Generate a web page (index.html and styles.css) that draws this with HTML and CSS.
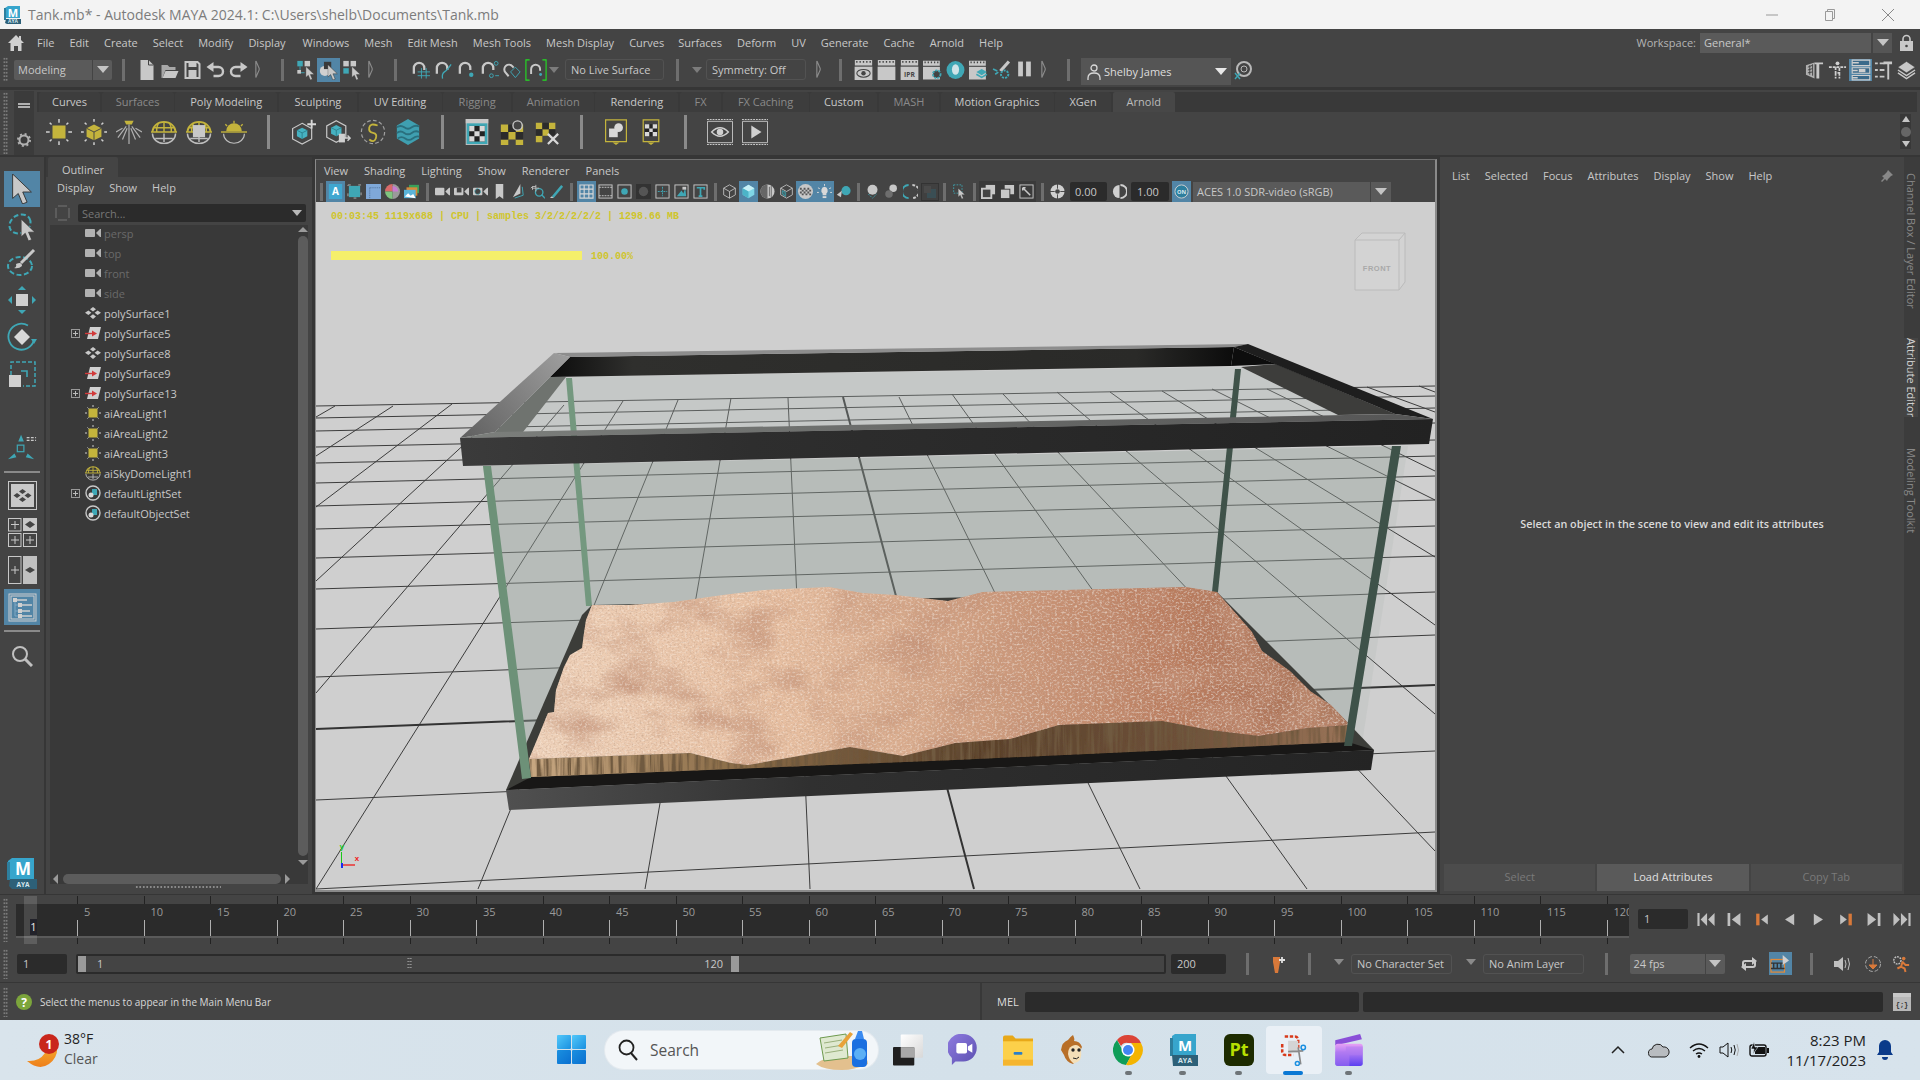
FILE: index.html
```
<!DOCTYPE html>
<html lang="en">
<head>
<meta charset="utf-8">
<title>Tank.mb* - Autodesk MAYA 2024.1</title>
<link rel="stylesheet" href="styles.css">
</head>
<body>
<svg class="defs" width="0" height="0">
  <symbol id="cur" viewBox="0 0 10 16"><path d="M0 0v13l3-2.6L5.3 16l2.4-1-2.3-5.4H10z" fill="#c8c8c8" stroke="#333" stroke-width=".5"/></symbol>
  <symbol id="poly" viewBox="0 0 16 12"><path d="M8 0l3 2.2-3 2.2-3-2.2zM3.400 3.400l3 2.400-3 2.200L0 5.800zM12.600 3.400L16 5.800l-3.400 2.200-3-2.200zM8 7.200l3 2.300L8 12 5 9.500z" fill="#c8c8c8"/></symbol>
  <symbol id="cam" viewBox="0 0 16 10"><rect y="1" width="10" height="8" rx="1" fill="#c8c8c8"/><path d="M11 5l4-4h1v8h-1z" fill="#c8c8c8"/></symbol>
  <symbol id="mesh" viewBox="0 0 16 12"><path d="M5 0h11l-3 12H2z" fill="#d0d0d0"/><path d="M0 6.500h9" stroke="#d23a3a" stroke-width="1.400"/><path d="M7 3.500l5 3-5 3z" fill="#d23a3a"/></symbol>
  <symbol id="alight" viewBox="0 0 16 16"><rect x="3.500" y="3.500" width="9" height="9" fill="#c4b43c"/><path d="M8 0v2M8 14v2M0 8h2M14 8h2M2.500 2.500l1 1M12.500 12.500l1 1M13.500 2.500l-1 1M2.500 13.500l1-1" stroke="#cfcfcf"/></symbol>
  <symbol id="dome" viewBox="0 0 18 16"><path d="M1 8a8 7 0 0 1 16 0" fill="none" stroke="#c4b43c" stroke-width="1.200"/><path d="M0 8h18M2 5h14M9 1v7M5 2q-1.500 3-1 6M13 2q1.500 3 1 6" stroke="#c4b43c" fill="none"/><path d="M1 9a8 7 0 0 0 16 0M3 12.500h12M9 9v6" fill="none" stroke="#bdbdbd"/></symbol>
  <symbol id="set" viewBox="0 0 16 16"><circle cx="8" cy="8" r="7" fill="none" stroke="#c8c8c8" stroke-width="1.400"/><rect x="7" y="4" width="5" height="6" fill="#3fa7b5"/><circle cx="6" cy="10" r="2.500" fill="#d8d8d8"/></symbol>
  <symbol id="plus" viewBox="0 0 9 9"><rect x=".5" y=".5" width="8" height="8" fill="none" stroke="#999"/><path d="M2 4.500h5M4.500 2v5" stroke="#bbb"/></symbol>
  <symbol id="mag" viewBox="0 0 18 18"><path d="M3 14V8a5.500 5.500 0 0 1 11 0v2" fill="none" stroke="#c8c8c8" stroke-width="2.400"/></symbol>
  <symbol id="clap" viewBox="0 0 16 18"><path d="M0 0h16v5H0z" fill="#c8c8c8"/><path d="M2 1v1.500M5 1v1.500M8 1v1.500M11 1v1.500M14 1v1.500" stroke="#444" stroke-width="1.200"/></symbol>
  <symbol id="tilt" viewBox="0 0 6 22"><path d="M1 0l4 9v2l-4 9z" fill="none" stroke="#8a8a8a" stroke-width="1.400"/></symbol>
</svg>

<header class="title">
  <svg class="t-logo" viewBox="0 0 20 20"><path d="M2 3l3-2h12v12H2z" fill="#37a5cc"/><path d="M1 3h2v12H1z" fill="#2d7f9e"/><path d="M3 14h15v5H4l-2-1z" fill="#2d6078"/><text class="t-m" x="10" y="11.500">M</text><text class="t-aya" x="10" y="18">AYA</text></svg>
  <span class="t-text">Tank.mb* - Autodesk MAYA 2024.1: C:\Users\shelb\Documents\Tank.mb</span>
  <span class="t-ctrls">
    <svg class="t-c" viewBox="0 0 14 14"><path d="M1 7h12" stroke="#999" fill="none"/></svg>
    <svg class="t-c" viewBox="0 0 14 14"><path d="M2.500 3.500h7v9h-7zM4.500 3.500v-2h7v9h-2" stroke="#999" fill="none"/></svg>
    <svg class="t-c" viewBox="0 0 14 14"><path d="M1 1l12 12M13 1L1 13" stroke="#888" fill="none"/></svg>
  </span>
</header>

<nav class="menu">
  <svg class="home" viewBox="0 0 16 16"><path d="M8 0L0 8h2.500v8H6v-5h4v5h3.500V8H16l-3-3V1h-2v2z" fill="#d0d0d0"/></svg>
  <ul class="menu-list">
    <li>File</li><li>Edit</li><li>Create</li><li>Select</li><li>Modify</li><li>Display</li><li>Windows</li><li>Mesh</li><li>Edit Mesh</li><li>Mesh Tools</li><li>Mesh Display</li><li>Curves</li><li>Surfaces</li><li>Deform</li><li>UV</li><li>Generate</li><li>Cache</li><li>Arnold</li><li>Help</li>
  </ul>
  <div class="workspace">
    <span class="ws-label">Workspace:</span>
    <span class="ws-box">General*</span>
    <span class="ws-arrow"><i class="tri"></i></span>
    <svg class="lock" viewBox="0 0 13 17"><path d="M3 8V5a3.500 3.500 0 0 1 7 0v3" fill="none" stroke="#c8c8c8" stroke-width="1.600"/><rect y="7" width="13" height="10" fill="#c8c8c8"/><circle cx="6.500" cy="12" r="1.300" fill="#444"/></svg>
  </div>
</nav>

<section class="status">
  <i class="grip grip-s"></i>
  <div class="dd dd-mode"><span class="dd-text">Modeling</span><span class="dd-arrow"><i class="tri"></i></span></div>
  <i class="handle"></i>
  <span class="slot"><svg class="ic" viewBox="0 0 18 20"><path d="M3 0h8l5 5v15H3z" fill="#c8c8c8"/><path d="M11 0v5h5" fill="none" stroke="#444"/></svg></span>
  <span class="slot"><svg class="ic" viewBox="0 0 18 20"><path d="M1 5h6l2 2h6v3H5l-3 8H1z" fill="#a8a8a8"/><path d="M5 11h13l-3 7H2z" fill="#c8c8c8"/></svg></span>
  <span class="slot"><svg class="ic" viewBox="0 0 18 20"><path d="M2 2h12l2 2v14H2z" fill="none" stroke="#c8c8c8" stroke-width="2"/><rect x="5" y="2" width="8" height="5" fill="#c8c8c8"/><rect x="5" y="10" width="8" height="7" fill="#c8c8c8"/></svg></span>
  <span class="slot"><svg class="ic" viewBox="0 0 18 20"><path d="M2 7h10a4.500 4.500 0 0 1 0 9H7" fill="none" stroke="#c8c8c8" stroke-width="2.400"/><path d="M7 2v10L0 7z" fill="#c8c8c8"/></svg></span>
  <span class="slot"><svg class="ic" viewBox="0 0 18 20"><path d="M16 7H6a4.500 4.500 0 0 0 0 9h5" fill="none" stroke="#c8c8c8" stroke-width="2.400"/><path d="M11 2v10l7-5z" fill="#c8c8c8"/></svg></span>
  <svg class="collapse" viewBox="0 0 6 22"><use href="#tilt"/></svg>
  <i class="handle"></i>
  <span class="slot"><svg class="ic" viewBox="0 0 20 22"><rect x="1" y="1" width="6" height="6" fill="#3fa7b5"/><rect x="9" y="1" width="6" height="6" fill="#c8c8c8"/><path d="M4 7v7h5" fill="none" stroke="#3fa7b5"/><rect x="1" y="11" width="4" height="4" fill="#c8c8c8"/><use href="#cur" x="10" y="7" width="10" height="15"/></svg></span>
  <span class="slot slot-on"><svg class="ic" viewBox="0 0 20 22"><circle cx="6" cy="12" r="5.500" fill="#d0d0d0"/><rect x="5" y="2" width="8" height="8" fill="#3a3a3a"/><use href="#cur" x="9" y="5" width="11" height="17"/></svg></span>
  <span class="slot"><svg class="ic" viewBox="0 0 20 22"><rect x="1" y="1" width="6" height="6" fill="#c8c8c8"/><rect x="9" y="1" width="6" height="6" fill="#c8c8c8"/><rect x="1" y="9" width="6" height="6" fill="#3fa7b5"/><use href="#cur" x="10" y="7" width="10" height="15"/></svg></span>
  <svg class="collapse" viewBox="0 0 6 22"><use href="#tilt"/></svg>
  <i class="handle"></i>
  <span class="slot slot-first"><svg class="ic" viewBox="0 0 20 20"><use href="#mag" width="18" height="18"/><path d="M11 8v11M16 8v11M7 12h13M7 16h13" stroke="#3fa7b5"/></svg></span>
  <span class="slot"><svg class="ic" viewBox="0 0 20 20"><use href="#mag" width="18" height="18"/><path d="M18 4q-4 6-7 8t-2 7" fill="none" stroke="#3fa7b5" stroke-width="1.400"/></svg></span>
  <span class="slot"><svg class="ic" viewBox="0 0 20 20"><use href="#mag" width="18" height="18"/><circle cx="15" cy="15" r="2.300" fill="#3fa7b5"/></svg></span>
  <span class="slot"><svg class="ic" viewBox="0 0 20 20"><use href="#mag" width="18" height="18"/><circle cx="17" cy="3" r="2" fill="none" stroke="#3fa7b5"/><circle cx="12" cy="16" r="2" fill="none" stroke="#3fa7b5"/><path d="M16 16h4" stroke="#3fa7b5"/></svg></span>
  <span class="slot"><svg class="ic" viewBox="0 0 20 20"><g transform="rotate(-40 10 10)"><use href="#mag" width="16" height="16"/></g><path d="M8 12l5-5 5 5-5 6z" fill="none" stroke="#3fa7b5"/></svg></span>
  <span class="slot"><svg class="ic ic-l" viewBox="0 0 24 24"><path d="M5 1H1v22h4M19 1h4v22h-4" fill="none" stroke="#22e022" stroke-width="1.200"/><use href="#mag" x="4" y="4" width="16" height="16"/><circle cx="17" cy="17" r="1.600" fill="#3fa7b5"/></svg></span>
  <i class="tri tri-sm tri-a"></i>
  <span class="outbox ob-live">No Live Surface</span>
  <i class="handle handle-b"></i>
  <i class="tri tri-sm tri-c"></i>
  <span class="outbox ob-sym">Symmetry: Off</span>
  <svg class="collapse collapse-d" viewBox="0 0 6 22"><use href="#tilt"/></svg>
  <i class="handle"></i>
  <span class="slot"><svg class="ic" viewBox="0 0 16 18"><use href="#clap" width="16" height="18"/><rect y="6" width="16" height="12" fill="#c8c8c8"/><ellipse cx="8" cy="12" rx="6" ry="3.500" fill="none" stroke="#444"/><circle cx="8" cy="12" r="2" fill="#444"/></svg></span>
  <span class="slot"><svg class="ic" viewBox="0 0 16 18"><use href="#clap" width="16" height="18"/><rect y="6" width="16" height="12" fill="#c8c8c8"/></svg></span>
  <span class="slot"><svg class="ic" viewBox="0 0 16 18"><use href="#clap" width="16" height="18"/><rect y="6" width="16" height="12" fill="#c8c8c8"/><text class="ipr" x="8" y="15.500">IPR</text></svg></span>
  <span class="slot"><svg class="ic" viewBox="0 0 18 18"><use href="#clap" width="16" height="18"/><rect y="6" width="16" height="12" fill="#c8c8c8"/><circle cx="13" cy="13" r="3.600" fill="#444" stroke="#3fa7b5" stroke-width="1.800" stroke-dasharray="2 1"/></svg></span>
  <span class="slot"><svg class="ic" viewBox="0 0 18 18"><ellipse cx="9" cy="9" rx="8.500" ry="8.500" fill="#3fa7b5"/><ellipse cx="9" cy="8.500" rx="3.400" ry="5" fill="#cfe4e8"/></svg></span>
  <span class="slot"><svg class="ic" viewBox="0 0 18 18"><use href="#clap" width="16" height="18"/><rect y="6" width="16" height="12" fill="#c8c8c8"/><path d="M12 8l5 3-5 3-5-3z" fill="#3fa7b5"/><path d="M7 13l5 3 5-3" fill="none" stroke="#3fa7b5" stroke-width="1.500"/></svg></span>
  <span class="slot"><svg class="ic" viewBox="0 0 18 18"><path d="M16 1L8 10" stroke="#c8c8c8" stroke-width="3"/><path d="M1 8l4 2M3 13l3-2" stroke="#3fa7b5" stroke-width="1.500"/><circle cx="12" cy="13" r="3.500" fill="none" stroke="#3fa7b5" stroke-width="1.800" stroke-dasharray="2 1"/></svg></span>
  <span class="slot"><svg class="ic" viewBox="0 0 18 18"><rect x="3" y="1" width="4.500" height="14" fill="#c8c8c8"/><rect x="10.500" y="1" width="4.500" height="14" fill="#c8c8c8"/></svg></span>
  <svg class="collapse" viewBox="0 0 6 22"><use href="#tilt"/></svg>
  <i class="handle"></i>
  <div class="profile">
    <svg class="person" viewBox="0 0 14 16"><circle cx="7" cy="4" r="3" fill="none" stroke="#d8d8d8" stroke-width="1.300"/><path d="M1 16v-2q0-5 6-5t6 5v2" fill="none" stroke="#d8d8d8" stroke-width="1.300"/></svg>
    <span class="p-name">Shelby James</span>
    <i class="tri tri-w"></i>
  </div>
  <svg class="helpx" viewBox="0 0 18 20"><circle cx="10" cy="9" r="7" fill="none" stroke="#b8b8b8" stroke-width="2"/><circle cx="10" cy="9" r="3" fill="none" stroke="#b8b8b8"/><path d="M1 13l5 6M6 13l-5 6" stroke="#3fa7b5" stroke-width="1.400"/></svg>
  <div class="st-right">
    <span class="slot"><svg class="ic" viewBox="0 0 20 20"><path d="M1 5l9-3v17L1 15z" fill="#b0b0b0"/><path d="M3 7l5-2M3 10l5-1.500M3 13l5-1M5 5v10M8 4v12" stroke="#444"/><path d="M10 2h9v2h-4v15h-3V4h-2z" fill="#c8c8c8"/></svg></span>
    <span class="slot"><svg class="ic" viewBox="0 0 20 20"><circle cx="10" cy="3" r="2" fill="#d0d0d0"/><path d="M1 7h18M8 7v6h4V7M8 13v6M12 13v6" stroke="#d0d0d0" stroke-width="1.800" fill="none" stroke-dasharray="3 1"/></svg></span>
    <span class="slot slot-on"><svg class="ic ic-l" viewBox="0 0 20 20"><path d="M2 1h16v5H2zM2 8h16v5H2zM2 15h16v4H2z" fill="#3b6a8a" stroke="#cfcfcf"/><path d="M2 3.500h6M2 10.500h5M2 17h5" stroke="#cfcfcf" stroke-width="1.400"/><rect x="8" y="9" width="6" height="3" fill="#cfcfcf"/></svg></span>
    <span class="slot"><svg class="ic" viewBox="0 0 20 20"><path d="M1 3h3M1 10h3M1 17h3M6 3h5M6 10h5M6 17h5" stroke="#c8c8c8" stroke-width="2"/><path d="M10 1h9v3h-3v16h-2V4h-4z" fill="#c8c8c8"/></svg></span>
    <span class="slot"><svg class="ic" viewBox="0 0 20 20"><path d="M10 1l9 6-9 6-9-6z" fill="#c8c8c8" stroke="#444" stroke-width=".5"/><path d="M1 10l9 6 9-6M1 13l9 6 9-6" fill="none" stroke="#c8c8c8" stroke-width="1.500"/></svg></span>
  </div>
</section>

<section class="shelf">
  <i class="grip grip-sh"></i>
  <div class="shelf-left">
    <svg class="eq" viewBox="0 0 12 8"><path d="M0 1h12M0 4h12" stroke="#b0b0b0" stroke-width="2"/></svg>
    <svg class="eq-gear" viewBox="0 0 14 14"><circle cx="7" cy="7" r="4.500" fill="none" stroke="#b0b0b0" stroke-width="2"/><circle cx="7" cy="7" r="6" fill="none" stroke="#b0b0b0" stroke-width="2" stroke-dasharray="2 2.700"/></svg>
  </div>
  <div class="shelf-main">
    <div class="tabs">
      <span class="tab">Curves</span><span class="tab dim">Surfaces</span><span class="tab">Poly Modeling</span><span class="tab">Sculpting</span><span class="tab">UV Editing</span><span class="tab dim">Rigging</span><span class="tab dim">Animation</span><span class="tab">Rendering</span><span class="tab dim">FX</span><span class="tab dim">FX Caching</span><span class="tab">Custom</span><span class="tab dim">MASH</span><span class="tab">Motion Graphics</span><span class="tab">XGen</span><span class="tab on">Arnold</span>
    </div>
    <div class="shelf-icons">
      <span class="si"><svg viewBox="0 0 28 28"><rect x="7" y="7" width="14" height="14" fill="#c4b43c"/><path d="M14 0v4M14 24v4M0 14h4M24 14h4M4 4l2 2M22 22l2 2M24 4l-2 2M4 24l2-2" stroke="#cfcfcf" stroke-width="1.600"/></svg></span>
      <span class="si"><svg viewBox="0 0 28 28"><path d="M14 6l8 4v9l-8 4-8-4v-9z" fill="#c4b43c"/><path d="M6 10l8 4 8-4M14 14v9" stroke="#444" fill="none"/><path d="M14 0v3M14 25v3M0 14h3M25 14h3M4 4l2 2M22 22l2 2M24 4l-2 2M4 24l2-2" stroke="#cfcfcf" stroke-width="1.600"/></svg></span>
      <span class="si"><svg viewBox="0 0 28 28"><path d="M9 2h10l-2 4h-6z" fill="#c4b43c"/><path d="M14 6v21M11 8L2 20M17 8l9 12M7 10L0 14M21 10l7 4M12 10l-5 12M16 10l5 12" stroke="#b0b0b0" stroke-width="1.300"/></svg></span>
      <span class="si"><svg viewBox="0 0 30 28"><use href="#dome" width="30" height="28"/></svg></span>
      <span class="si"><svg viewBox="0 0 30 28"><use href="#dome" width="30" height="28"/><rect x="8" y="6" width="14" height="14" fill="#c8c8c8"/></svg></span>
      <span class="si"><svg viewBox="0 0 30 28"><path d="M6 13a9 9 0 0 1 18 0z" fill="#c4b43c"/><path d="M15 1v3M5 5l2 2M25 5l-2 2" stroke="#c4b43c" stroke-width="1.500"/><path d="M0 14h30" stroke="#c4b43c" stroke-width="1.600"/><path d="M3 16a12 11 0 0 0 24 0" fill="none" stroke="#bdbdbd" stroke-width="1.300"/></svg></span>
      <i class="sep"></i>
      <span class="si"><svg viewBox="0 0 30 28"><path d="M14 4l11 6v12l-11 6-11-6V10z" fill="none" stroke="#c8c8c8" stroke-width="1.400"/><path d="M14 9l6 3v7l-6 3-6-3v-7z" fill="#46b2c2"/><path d="M8 12l6 3 6-3M14 15v7" stroke="#2a7d8a" fill="none"/><path d="M20 5h10M25 0v10" stroke="#d8d8d8" stroke-width="2.200"/></svg></span>
      <span class="si"><svg viewBox="0 0 30 28"><path d="M13 1l11 6v13l-11 6-11-6V7z" fill="none" stroke="#c8c8c8" stroke-width="1.400"/><path d="M13 6l6 3v7l-6 3-6-3V9z" fill="#46b2c2"/><path d="M7 9l6 3 6-3M13 12v7" stroke="#2a7d8a" fill="none"/><rect x="16" y="16" width="7" height="10" fill="#d0d0d0"/><path d="M23 21h6M26 18l3 3-3 3" stroke="#d0d0d0" stroke-width="1.600" fill="none"/></svg></span>
      <span class="si"><svg viewBox="0 0 28 28"><circle cx="14" cy="14" r="12.500" fill="none" stroke="#a0a0a0" stroke-width="1.300" stroke-dasharray="4 2.500"/><path d="M19 7q-8-3-9 2t4 6 3 6-7 1" fill="none" stroke="#c4b43c" stroke-width="2"/></svg></span>
      <span class="si"><svg viewBox="0 0 26 28"><path d="M13 0l12 7v14l-12 7-12-7V7z" fill="#3f9fb0"/><path d="M1 9q4-3 8 0t8 0 8-1M1 15q4-3 8 0t8 0 8-1M2 21q4-3 8 0t8 0 7-2" fill="none" stroke="#2a6f7d" stroke-width="2"/></svg></span>
      <i class="sep"></i>
      <span class="si"><svg viewBox="0 0 26 30"><rect x=".5" y=".5" width="25" height="29" fill="#3fa7b5" stroke="#c8c8c8"/><rect y="0" width="26" height="5" fill="#c8c8c8"/><rect x="4" y="8" width="18" height="18" fill="#222"/><path d="M4 8h6v6H4zM16 8h6v6h-6zM10 14h6v6h-6zM4 20h6v6H4zM16 20h6v6h-6z" fill="#d8d8d8"/></svg></span>
      <span class="si"><svg viewBox="0 0 26 28"><path d="M1 6h8v8H1zM17 6h8v8h-8zM9 14h8v8H9zM1 22h8v6H1zM17 22h8v6h-8z" fill="#c4b43c"/><path d="M9 6h8v8H9zM1 14h8v8H1zM17 14h8v8h-8z" fill="#2b2b2b"/><circle cx="19" cy="7" r="5" fill="#444" stroke="#c8c8c8" stroke-width="1.500"/></svg></span>
      <span class="si"><svg viewBox="0 0 26 28"><path d="M1 4h7v7H1zM15 4h7v7h-7zM8 11h7v7H8zM1 18h7v7H1z" fill="#c4b43c"/><path d="M8 4h7v7H8zM1 11h7v7H1zM15 11h7v7h-7z" fill="#2b2b2b"/><path d="M14 16l11 11M25 16L14 27" stroke="#d8d8d8" stroke-width="2.400"/></svg></span>
      <i class="sep"></i>
      <span class="si"><svg viewBox="0 0 26 30"><path d="M1 1h24v25H1z" fill="none" stroke="#c4b43c" stroke-width="1.400"/><path d="M9 27h8l-4 3z" fill="#c4b43c"/><rect x="5" y="11" width="10" height="10" fill="#d8d8d8"/><circle cx="16" cy="10" r="5" fill="#d8d8d8"/></svg></span>
      <span class="si"><svg viewBox="0 0 26 30"><path d="M4 1h18v25H4z" fill="none" stroke="#c4b43c" stroke-width="1.400"/><path d="M9 27h8l-4 3z" fill="#c4b43c"/><rect x="6" y="6" width="14" height="14" fill="#222"/><path d="M6 6h5v5H6zM15 6h5v5h-5zM11 11h4v4h-4zM6 15h5v5H6zM15 15h5v5h-5z" fill="#d8d8d8"/></svg></span>
      <i class="sep"></i>
      <span class="si"><svg viewBox="0 0 28 28"><path d="M.5 2.500h27v23H.5z" fill="none" stroke="#c8c8c8"/><path d="M0 .5h28M0 27.500h28" stroke="#c8c8c8" stroke-dasharray="2 1" stroke-width="1.400"/><path d="M5 14q9-9 18 0-9 9-18 0z" fill="none" stroke="#d0d0d0" stroke-width="1.600"/><circle cx="14" cy="14" r="3.500" fill="#d0d0d0"/></svg></span>
      <span class="si"><svg viewBox="0 0 28 28"><path d="M.5 2.500h27v23H.5z" fill="none" stroke="#c8c8c8"/><path d="M0 .5h28M0 27.500h28" stroke="#c8c8c8" stroke-dasharray="2 1" stroke-width="1.400"/><path d="M10 7l11 7-11 7z" fill="#d0d0d0"/></svg></span>
      <span class="shelf-scroll"><i class="tri tri-up"></i><i class="scroll-dot"></i><i class="tri"></i></span>
    </div>
  </div>
</section>

<main class="work">
  <aside class="toolbox">
    <span class="tool tool-first tool-on"><svg class="ti" viewBox="0 0 20 26"><use href="#cur" width="20" height="26"/></svg></span>
    <span class="tool"><svg class="ti" viewBox="0 0 30 30"><ellipse cx="13" cy="13" rx="11" ry="9" transform="rotate(-30 13 13)" fill="none" stroke="#3fa7b5" stroke-width="2" stroke-dasharray="5 2.500"/><use href="#cur" x="14" y="8" width="14" height="22"/></svg></span>
    <span class="tool"><svg class="ti" viewBox="0 0 30 30"><ellipse cx="13" cy="18" rx="12" ry="9" fill="none" stroke="#3fa7b5" stroke-width="2" stroke-dasharray="5 2.500"/><path d="M27 2L14 15" stroke="#c8c8c8" stroke-width="3"/><path d="M9 16q6-3 6 2-3 3-8 2 3-1 2-4z" fill="#c8c8c8"/></svg></span>
    <span class="tool"><svg class="ti" viewBox="0 0 30 30"><rect x="9" y="9" width="12" height="12" fill="#d0d0d0"/><path d="M15 1l4 4h-8zM15 29l-4-4h8zM1 15l4-4v8zM29 15l-4 4v-8z" fill="#3fa7b5"/></svg></span>
    <span class="tool"><svg class="ti" viewBox="0 0 30 30"><path d="M15 7l8 8-8 8-8-8z" fill="#d8d8d8"/><path d="M27 18A13 13 0 1 1 21 3.500" fill="none" stroke="#3fa7b5" stroke-width="1.800"/><path d="M24 17h6l-3 5z" fill="#3fa7b5"/></svg></span>
    <span class="tool"><svg class="ti" viewBox="0 0 30 30"><path d="M4 16V3h24v24H16" fill="none" stroke="#3fa7b5" stroke-width="1.500" stroke-dasharray="4 2"/><rect x="2" y="16" width="12" height="12" fill="#d0d0d0"/><path d="M14 12h6v6" fill="none" stroke="#3fa7b5" stroke-width="1.600"/></svg></span>
    <span class="tool tool-manip"><svg class="ti" viewBox="0 0 32 28"><rect x="11" y="12" width="7" height="7" fill="none" stroke="#3fa7b5" stroke-width="1.300"/><path d="M15 1l3 7h-6zM1 27l7-6 2 4zM29 27l-7-6-2 4z" fill="#3fa7b5"/><path d="M21 4h10M21 7h10" stroke="#c8c8c8" stroke-dasharray="3 1.500" stroke-width="1.400"/></svg></span>
    <i class="tb-line tb-line-a"></i>
    <span class="lay lay-one"><svg viewBox="0 0 29 29"><rect x=".5" y=".5" width="28" height="28" fill="none" stroke="#c8c8c8"/><rect x="3" y="3" width="23" height="23" fill="#c8c8c8"/><path d="M14.500 8l3.500 2.500-3.500 2.500-3.500-2.500zM9 12l3.500 2.500L9 17l-3.500-2.500zM20 12l3.500 2.500L20 17l-3.500-2.500zM14.500 16l3.500 2.500-3.500 2.500-3.500-2.500z" fill="#444"/></svg></span>
    <span class="lay lay-four"><svg viewBox="0 0 29 29"><rect x=".5" y=".5" width="12.500" height="12.500" fill="none" stroke="#c8c8c8"/><path d="M3 6.500h8M7 3v8" stroke="#c8c8c8"/><rect x="15" width="14" height="13" fill="#c8c8c8"/><path d="M22 3l5 3.500-5 3.500-5-3.500z" fill="#444"/><rect x=".5" y="15.500" width="12.500" height="13" fill="none" stroke="#c8c8c8"/><path d="M3 22h8M7 18v8" stroke="#c8c8c8"/><rect x="15.500" y="15.500" width="13" height="13" fill="none" stroke="#c8c8c8"/><path d="M18 22h8M22 18v8" stroke="#c8c8c8"/></svg></span>
    <span class="lay lay-two"><svg viewBox="0 0 29 28"><rect x=".5" y=".5" width="12.500" height="27" fill="none" stroke="#c8c8c8"/><path d="M3 14h8M7 10v8" stroke="#c8c8c8"/><rect x="15" width="14" height="28" fill="#c0c0c0"/><path d="M22 11l5 3-5 3-5-3z" fill="#444"/></svg></span>
    <span class="tool-out"><svg viewBox="0 0 29 29" class="ti-out"><rect x="1" y="1" width="27" height="27" fill="none" stroke="#d0d0d0"/><rect x="3" y="3" width="23" height="23" fill="none" stroke="#d0d0d0"/><path d="M6 7h13M12 12h12M12 18h10M12 23h12" stroke="#d0d0d0" stroke-width="1.600"/><path d="M7 9v14M7 12h3M7 18h3M7 23h3" stroke="#7fa8c4"/><path d="M5 5h4v4H5zM10 10h4v4h-4zM10 16h4v4h-4zM10 21h4v4h-4z" fill="#d0d0d0"/></svg></span>
    <i class="tb-line tb-line-b"></i>
    <svg class="tb-search" viewBox="0 0 22 22"><circle cx="9" cy="9" r="7" fill="none" stroke="#c0c0c0" stroke-width="2"/><path d="M14 14l7 7" stroke="#c0c0c0" stroke-width="3"/></svg>
    <svg class="tb-logo" viewBox="0 0 30 32"><path d="M1 4l4-3h22v22H1z" fill="#37a5cc"/><path d="M0 5h3v18H0z" fill="#2d7f9e"/><path d="M3 22h27v10H5l-3-3z" fill="#2d6078"/><text class="l-m" x="16" y="18">M</text><text class="l-aya" x="16" y="30">AYA</text></svg>
  </aside>

  <section class="outliner">
    <div class="pane-tabs"><span class="pane-tab">Outliner</span></div>
    <div class="out-body">
      <ul class="out-menu"><li>Display</li><li>Show</li><li>Help</li></ul>
      <div class="out-search">
        <svg class="s-ico" viewBox="0 0 15 16"><path d="M3 1h9M3 15h9M1 3v10M14 3v10" stroke="#5c5c5c" stroke-width="2"/></svg>
        <div class="s-field"><span>Search...</span><i class="tri tri-g"></i></div>
      </div>
      <div class="list">
        <ul class="rows">
          <li class="row off"><i class="ex"></i><svg class="ri"><use href="#cam" y="3" width="16" height="10"/></svg><span>persp</span></li>
          <li class="row off"><i class="ex"></i><svg class="ri"><use href="#cam" y="3" width="16" height="10"/></svg><span>top</span></li>
          <li class="row off"><i class="ex"></i><svg class="ri"><use href="#cam" y="3" width="16" height="10"/></svg><span>front</span></li>
          <li class="row off"><i class="ex"></i><svg class="ri"><use href="#cam" y="3" width="16" height="10"/></svg><span>side</span></li>
          <li class="row"><i class="ex"></i><svg class="ri"><use href="#poly" y="2" width="16" height="12"/></svg><span>polySurface1</span></li>
          <li class="row"><svg class="ex"><use href="#plus" width="9" height="9"/></svg><svg class="ri"><use href="#mesh" y="2" width="16" height="12"/></svg><span>polySurface5</span></li>
          <li class="row"><i class="ex"></i><svg class="ri"><use href="#poly" y="2" width="16" height="12"/></svg><span>polySurface8</span></li>
          <li class="row"><i class="ex"></i><svg class="ri"><use href="#mesh" y="2" width="16" height="12"/></svg><span>polySurface9</span></li>
          <li class="row"><svg class="ex"><use href="#plus" width="9" height="9"/></svg><svg class="ri"><use href="#mesh" y="2" width="16" height="12"/></svg><span>polySurface13</span></li>
          <li class="row"><i class="ex"></i><svg class="ri"><use href="#alight" width="16" height="16"/></svg><span>aiAreaLight1</span></li>
          <li class="row"><i class="ex"></i><svg class="ri"><use href="#alight" width="16" height="16"/></svg><span>aiAreaLight2</span></li>
          <li class="row"><i class="ex"></i><svg class="ri"><use href="#alight" width="16" height="16"/></svg><span>aiAreaLight3</span></li>
          <li class="row"><i class="ex"></i><svg class="ri"><use href="#dome" width="16" height="16"/></svg><span>aiSkyDomeLight1</span></li>
          <li class="row"><svg class="ex"><use href="#plus" width="9" height="9"/></svg><svg class="ri"><use href="#set" width="16" height="16"/></svg><span>defaultLightSet</span></li>
          <li class="row"><i class="ex"></i><svg class="ri"><use href="#set" width="16" height="16"/></svg><span>defaultObjectSet</span></li>
        </ul>
        <div class="v-scroll"><i class="tri tri-up tri-g"></i><i class="v-thumb"></i><i class="tri tri-g"></i></div>
      </div>
      <div class="h-scroll"><i class="tri-l"></i><i class="h-thumb"></i><i class="tri-r"></i></div>
      <i class="h-dots"></i>
    </div>
  </section>

  <section class="view">
    <ul class="view-menu"><li>View</li><li>Shading</li><li>Lighting</li><li>Show</li><li>Renderer</li><li>Panels</li></ul>
    <div class="view-bar">
      <i class="vh vh-10"></i>
      <span class="vs vs-on"><svg viewBox="0 0 16 18"><rect width="16" height="18" fill="#3fa7d0"/><text class="va" x="8" y="13">A</text></svg></span>
      <span class="vs"><svg viewBox="0 0 16 16"><rect x="2" y="2" width="12" height="12" fill="#3fa7b5"/><path d="M1 1h14v14H1z" fill="none" stroke="#b0b0b0" stroke-dasharray="3 8"/></svg></span>
      <span class="vs"><svg viewBox="0 0 16 16"><rect width="16" height="16" fill="#7fa8d8"/><path d="M4 4h12M4 4v12" stroke="#4e6e96" stroke-dasharray="1 1"/></svg></span>
      <span class="vs"><svg viewBox="0 0 16 16"><path d="M8 0a8 8 0 0 1 0 16z" fill="#9a9a9a"/><path d="M8 0A8 8 0 0 0 0 8h8z" fill="#d86a6a"/><path d="M0 8a8 8 0 0 0 8 8V8z" fill="#7fc47f"/><path d="M8 2a6 6 0 0 1 6 6H8z" fill="#c87ad0"/></svg></span>
      <span class="vs"><svg viewBox="0 0 18 16"><rect x="6" width="12" height="10" fill="#3aa05a"/><rect x="3" y="3" width="13" height="10" fill="#d88a3a"/><rect y="6" width="14" height="10" fill="#5ab4d8"/><path d="M1 14l4-4 3 3 3-2 3 5z" fill="#fff"/></svg></span>
      <i class="vh vh-12"></i>
      <span class="vs"><svg viewBox="0 0 16 16"><use href="#cam" y="3" width="16" height="10"/></svg></span>
      <span class="vs"><svg viewBox="0 0 16 16"><use href="#cam" y="3" width="16" height="10"/><rect x="3" y="4" width="5" height="5" fill="#444"/></svg></span>
      <span class="vs"><svg viewBox="0 0 16 16"><use href="#cam" y="3" width="16" height="10"/><circle cx="5" cy="8" r="3" fill="#444" stroke="#3fa7b5" stroke-dasharray="2 1"/></svg></span>
      <span class="vs"><svg viewBox="0 0 12 16"><path d="M2 0h8v16l-4-3-4 3z" fill="#c8c8c8"/></svg></span>
      <span class="vs"><svg viewBox="0 0 16 16"><path d="M10 0v10L2 14z" fill="#c8c8c8"/><path d="M12 3l1 9-9 3" stroke="#3fa7b5" fill="none"/></svg></span>
      <span class="vs"><svg viewBox="0 0 18 18"><path d="M3 7V3h4M1 5l2-2" stroke="#c8c8c8" fill="none"/><circle cx="11" cy="10" r="4.500" fill="none" stroke="#3fa7b5" stroke-width="1.600"/><path d="M14 13l4 4" stroke="#3fa7b5" stroke-width="1.600"/><path d="M7 1v8M3 5h8" stroke="#c8c8c8"/></svg></span>
      <span class="vs"><svg viewBox="0 0 16 16"><path d="M3 13L13 1l2 2L5 15z" fill="#3fa7b5"/><path d="M1 15l2-2 2 2z" fill="#c8c8c8"/></svg></span>
      <i class="vh vh-11"></i>
      <span class="vs vs-on"><svg viewBox="0 0 16 16"><path d="M1 1h14v14H1zM1 5.500h14M1 10.500h14M5.500 1v14M10.500 1v14" fill="none" stroke="#d8d8d8" stroke-width="1.200"/></svg></span>
      <span class="vs"><svg viewBox="0 0 16 16"><rect x="1" y="1" width="14" height="14" fill="none" stroke="#c8c8c8"/><path d="M1 3.500h14M1 12.500h14" stroke="#c8c8c8" stroke-dasharray="2 1"/></svg></span>
      <span class="vs"><svg viewBox="0 0 16 16"><rect x="1" y="1" width="14" height="14" fill="none" stroke="#c8c8c8"/><circle cx="8" cy="8" r="3.500" fill="#3fa7b5"/></svg></span>
      <span class="vs"><svg viewBox="0 0 16 16"><rect width="16" height="16" fill="#333"/><circle cx="8" cy="8" r="5" fill="#555"/></svg></span>
      <span class="vs"><svg viewBox="0 0 16 16"><rect x="1" y="1" width="14" height="14" fill="none" stroke="#c8c8c8"/><path d="M3 8h10M8 3v10" stroke="#3fa7b5" stroke-dasharray="2 1"/></svg></span>
      <span class="vs"><svg viewBox="0 0 16 16"><rect x="1" y="1" width="14" height="14" fill="none" stroke="#c8c8c8"/><path d="M3 13l5-6 2 3 2-6 1 9z" fill="#3fa7b5"/><rect x="9" y="3" width="4" height="3" fill="#c8c8c8"/></svg></span>
      <span class="vs"><svg viewBox="0 0 16 16"><rect x="1" y="1" width="14" height="14" fill="none" stroke="#c8c8c8"/><path d="M4 4h8v2M8 4v9M6 13h4" stroke="#3fa7b5" stroke-width="1.800" fill="none"/></svg></span>
      <i class="vh vh-10"></i>
      <span class="vs"><svg viewBox="0 0 16 18"><path d="M8 1l7 4v8l-7 4-7-4V5z" fill="none" stroke="#c8c8c8"/><path d="M1 5l7 4 7-4M8 9v8" stroke="#c8c8c8" fill="none"/></svg></span>
      <span class="vs vs-on"><svg viewBox="0 0 16 18"><path d="M8 1l7 4v8l-7 4-7-4V5z" fill="#7fd6e6"/><path d="M1 5l7 4 7-4-7-4z" fill="#c8f0f6"/><path d="M8 9v8L1 13V5z" fill="#4cb4c8"/></svg></span>
      <span class="vs"><svg viewBox="0 0 16 16"><circle cx="8" cy="8" r="7.500" fill="#c8c8c8"/><path d="M8 .5a7.500 7.500 0 0 0 0 15" fill="#666"/><path d="M12 2v12M10 3v10" stroke="#666"/></svg></span>
      <span class="vs"><svg viewBox="0 0 16 18"><path d="M8 1l7 4v8l-7 4-7-4V5z" fill="none" stroke="#c8c8c8"/><path d="M1 5l7 4 7-4" stroke="#c8c8c8" fill="none"/><path d="M3 8v4l4 3V10zM5 9v5" stroke="#3fa7b5" fill="none"/></svg></span>
      <span class="vs vs-on"><svg viewBox="0 0 16 16"><circle cx="8" cy="8" r="8" fill="#c8c8c8"/><path d="M2 4h2v2H2zM6 4h2v2H6zM10 4h2v2h-2zM4 6h2v2H4zM8 6h2v2H8zM12 6h2v2h-2zM2 8h2v2H2zM6 8h2v2H6zM10 8h2v2h-2zM4 10h2v2H4zM8 10h2v2H8zM12 10h2v2h-2z" fill="#555"/></svg></span>
      <span class="vs vs-on"><svg viewBox="0 0 16 16"><path d="M8 3a4 4 0 0 1 2 7v2H6v-2a4 4 0 0 1 2-7z" fill="#d8d8d8"/><rect x="6" y="13" width="4" height="2" fill="#d8d8d8"/><path d="M8 0v2M1 4l2 1M15 4l-2 1M0 9h2M14 9h2" stroke="#d8d8d8"/></svg></span>
      <span class="vs"><svg viewBox="0 0 18 16"><circle cx="12" cy="7" r="5.500" fill="#3fa7b5"/><path d="M1 12l6-5-1 8z" fill="#c8c8c8"/></svg></span>
      <i class="vh vh-10"></i>
      <span class="vs"><svg viewBox="0 0 16 18"><circle cx="8" cy="7" r="6" fill="#c8c8c8"/><path d="M3 12l5 5 5-5" fill="none" stroke="#3fa7b5" stroke-dasharray="2 1"/></svg></span>
      <span class="vs"><svg viewBox="0 0 16 18"><circle cx="10" cy="5" r="4.500" fill="#c8c8c8"/><circle cx="5" cy="12" r="4.500" fill="#6e6e6e"/></svg></span>
      <span class="vs"><svg viewBox="0 0 16 16"><path d="M6 1a7 7 0 0 0 0 14" fill="none" stroke="#3fa7b5" stroke-width="2"/><path d="M10 1a7 7 0 0 1 0 14" fill="none" stroke="#c8c8c8" stroke-width="2" stroke-dasharray="3 1.500"/></svg></span>
      <span class="vs vs-off"><svg viewBox="0 0 18 18"><rect x=".5" y=".5" width="17" height="17" fill="#404040" stroke="#333"/><rect x="6" y="6" width="9" height="9" fill="#3a4e54"/><rect x="3" y="3" width="7" height="7" fill="#4a4a4a"/></svg></span>
      <i class="vh vh-11"></i>
      <span class="vs"><svg viewBox="0 0 16 18"><rect x="1" y="1" width="10" height="10" fill="none" stroke="#3fa7b5" stroke-dasharray="2 1.500"/><use href="#cur" x="6" y="5" width="9" height="13"/></svg></span>
      <i class="vh vh-10"></i>
      <span class="vs vs-dk"><svg viewBox="0 0 16 16"><rect x="5" y="1" width="10" height="10" fill="#c8c8c8"/><rect x="1" y="5" width="10" height="10" fill="#444" stroke="#c8c8c8" stroke-width="2"/></svg></span>
      <span class="vs vs-dk"><svg viewBox="0 0 16 16"><path d="M5 1h10v10h-4V5H5z" fill="#c8c8c8"/><rect x="1" y="6" width="9" height="9" fill="#c8c8c8"/></svg></span>
      <span class="vs vs-dk"><svg viewBox="0 0 16 16"><rect x="1" y="1" width="14" height="14" fill="none" stroke="#c8c8c8"/><path d="M4 4l8 8M4 4h3M4 4v3" stroke="#c8c8c8" stroke-width="1.600"/></svg></span>
      <i class="vh vh-12"></i>
      <span class="vs"><svg viewBox="0 0 16 16"><circle cx="8" cy="8" r="7.500" fill="#d0d0d0"/><circle cx="8" cy="8" r="2.500" fill="#444"/><path d="M8 0v5M16 8h-5M8 16v-5M0 8h5" stroke="#444"/></svg></span>
      <span class="numbox nb-a">0.00</span>
      <span class="vs"><svg viewBox="0 0 16 16"><path d="M8 1a7 7 0 0 0 0 14z" fill="#d0d0d0"/><path d="M9 1a7 7 0 0 1 0 14" fill="none" stroke="#d0d0d0" stroke-width="2"/></svg></span>
      <span class="numbox nb-b">1.00</span>
      <span class="vs vs-on vs-onx"><svg viewBox="0 0 16 16"><circle cx="8" cy="8" r="7" fill="#2d7f9e" stroke="#d0d0d0"/><text class="von" x="8" y="10.500">ON</text></svg></span>
      <span class="aces">ACES 1.0 SDR-video (sRGB)</span>
      <span class="aces-arrow"><i class="tri"></i></span>
    </div>
    <div class="canvas">
      <svg class="scene" viewBox="316 202 1119 688" width="1119" height="688" preserveAspectRatio="none">
        <defs>
          <filter id="noise" x="0" y="0" width="100%" height="100%">
            <feTurbulence type="fractalNoise" baseFrequency=".5 .62" numOctaves="3" seed="4" result="n"/>
            <feColorMatrix in="n" type="matrix" values="0 0 0 0 .52  0 0 0 0 .34  0 0 0 0 .24  1.400 0 0 0 -.62" result="a"/>
            <feComposite in="a" in2="SourceAlpha" operator="in" result="b"/>
            <feTurbulence type="fractalNoise" baseFrequency=".4 .5" numOctaves="2" seed="11" result="n3"/>
            <feColorMatrix in="n3" type="matrix" values="0 0 0 0 1  0 0 0 0 .92  0 0 0 0 .82  1.200 0 0 0 -.58" result="a3"/>
            <feComposite in="a3" in2="SourceAlpha" operator="in" result="d"/>
            <feTurbulence type="fractalNoise" baseFrequency=".018 .03" numOctaves="3" seed="9" result="n2"/>
            <feColorMatrix in="n2" type="matrix" values="0 0 0 0 .55  0 0 0 0 .28  0 0 0 0 .18  2 0 0 0 -.88" result="a2"/>
            <feComposite in="a2" in2="SourceAlpha" operator="in" result="c"/>
            <feMerge><feMergeNode in="SourceGraphic"/><feMergeNode in="c"/><feMergeNode in="b"/><feMergeNode in="d"/></feMerge>
          </filter>
          <filter id="wood" x="0" y="0" width="100%" height="100%">
            <feTurbulence type="fractalNoise" baseFrequency=".22 .012" numOctaves="3" seed="7" result="n"/>
            <feColorMatrix in="n" type="matrix" values="0 0 0 0 .16  0 0 0 0 .1  0 0 0 0 .05  3.500 0 0 0 -1.450" result="a"/>
            <feComposite in="a" in2="SourceAlpha" operator="in" result="b"/>
            <feMerge><feMergeNode in="SourceGraphic"/><feMergeNode in="b"/></feMerge>
          </filter>
          <linearGradient id="soilTop" gradientUnits="userSpaceOnUse" x1="540" y1="720" x2="1340" y2="640">
            <stop offset="0" stop-color="#efd2ba"/><stop offset=".3" stop-color="#e8c0a2"/><stop offset=".55" stop-color="#d09e80"/><stop offset=".8" stop-color="#b97a5c"/><stop offset="1" stop-color="#a87258"/>
          </linearGradient>
          <linearGradient id="soilFront" gradientUnits="userSpaceOnUse" x1="530" y1="0" x2="1350" y2="0">
            <stop offset="0" stop-color="#c8a882"/><stop offset=".25" stop-color="#8a6c48"/><stop offset=".55" stop-color="#5a412b"/><stop offset=".8" stop-color="#6e513a"/><stop offset="1" stop-color="#9a7458"/>
          </linearGradient>
          <linearGradient id="barFront" gradientUnits="userSpaceOnUse" x1="460" y1="0" x2="1433" y2="0">
            <stop offset="0" stop-color="#3b3b3b"/><stop offset=".3" stop-color="#2e2e2e"/><stop offset="1" stop-color="#222"/>
          </linearGradient>
          <linearGradient id="barTop" gradientUnits="userSpaceOnUse" x1="460" y1="0" x2="1433" y2="0">
            <stop offset="0" stop-color="#7c7f7c"/><stop offset="1" stop-color="#555"/>
          </linearGradient>
          <linearGradient id="barLeft" gradientUnits="userSpaceOnUse" x1="460" y1="438" x2="560" y2="353">
            <stop offset="0" stop-color="#5f5f5f"/><stop offset="1" stop-color="#9c9c9c"/>
          </linearGradient>
          <linearGradient id="baseF" gradientUnits="userSpaceOnUse" x1="506" y1="0" x2="1374" y2="0">
            <stop offset="0" stop-color="#505050"/><stop offset=".35" stop-color="#303030"/><stop offset="1" stop-color="#242424"/>
          </linearGradient>
          <linearGradient id="backBar" gradientUnits="userSpaceOnUse" x1="550" y1="0" x2="1240" y2="0">
            <stop offset="0" stop-color="#0c0c0c"/><stop offset=".12" stop-color="#2f2f2d"/><stop offset=".85" stop-color="#2a2a28"/><stop offset="1" stop-color="#0a0a0a"/>
          </linearGradient>
        </defs>
        <rect x="316" y="202" width="1119" height="688" fill="#cfcfcf"/>
        <g class="gl">
          <path d="M316 406L1435 386M316 418L1435 396M316 431L1435 408M316 447L1435 423M316 463L1435 440M316 483L1435 456M316 506L1435 476M316 529L1435 500M316 558L1435 526M316 589L1435 556M316 629L1435 592M316 677L1435 635M316 800L1435 751M316 889L1435 832"/>
          <path d="M788 398L810 889M899 397L1140 889M952 394L1307 889M1003 394L1435 851M1057 392L1435 714M1110 392L1435 625M1162 391L1435 557M1212 389L1435 500M1267 389L1435 471M1367 387L1435 412M1419 386L1435 392M731 398L645 889M678 400L478 889M623 401L316 889M564 405L316 693M508 404L316 581M452 404L316 507M393 406L316 456M335 406L316 417"/>
        </g>
        <path class="gm" d="M316 729L1435 685M843 397L974 889"/>
        <path d="M523 432L566 377L1241 367L1338 415z" fill="#aeb8b2" fill-opacity=".28"/>
        <path d="M483 466L1400 446L1352 744L523 778z" fill="#96a39c" fill-opacity=".42"/>
        <path d="M1400 446L1408 446L1362 744L1352 744z" fill="#93a69c" fill-opacity=".12"/>
        <path d="M566 378L572 378L592 606L586 606z" fill="#74987f"/>
        <path d="M1235 369L1241 369L1218 592L1212 592z" fill="#3f5249"/>
        <path d="M582 615L592 605L1217 592L1350 725L1374 750L506 790z" fill="#3c3d39"/>
        <path d="M531 777L1348 742L1374 750L506 790z" fill="#181716"/>
        <path d="M506 790L1374 750L1371 770L509 810z" fill="url(#baseF)"/>
        <path d="M529 759L690 753L731 763L748 765L850 747L903 756L955 743L1010 739L1059 725L1162 721L1210 730L1259 736L1307 728L1350 725L1348 742L955 760L531 777z" fill="url(#soilFront)" filter="url(#wood)"/>
        <path d="M529 759L548 713L554 712L556 690L564 667L570 655L582 648L584 633L586 620L592 605L629 605L674 602L723 595L764 590L829 587L862 593L895 595L948 601L983 592L1186 587L1217 592L1252 632L1262 651L1290 671L1310 691L1331 705L1350 725L1307 728L1259 736L1210 730L1162 721L1059 725L1010 739L955 743L903 756L850 747L748 765L731 763L690 753z" fill="url(#soilTop)" filter="url(#noise)"/>
        <path d="M483 466L491 466L531 778L522 779z" fill="#6d9178"/>
        <path d="M1392 446L1401 446L1352 746L1344 746z" fill="#3e5249"/>
        <path d="M570 357L1234 347L1231 366L550 377z" fill="url(#backBar)"/>
        <path d="M554 353L1248 344L1234 347L570 357z" fill="#8d8d8d"/>
        <path d="M1234 347L1276 364L1231 366z" fill="#0d0d0d"/>
        <path d="M1241 367L1276 364L1395 414L1338 415z" fill="#3d3d3b"/>
        <path d="M1248 344L1433 419L1395 414L1234 347z" fill="#1e1e1e"/>
        <path d="M495 432L550 377L566 377L523 432z" fill="#6f736f"/>
        <path d="M460 438L554 353L570 357L495 432z" fill="url(#barLeft)"/>
        <path d="M460 438L495 432L1395 414L1433 419z" fill="url(#barTop)"/>
        <path d="M460 438L1433 419L1429 444L463 466z" fill="url(#barFront)"/>
        <g class="axis">
          <path d="M341.500 865V852" stroke="#19c919" fill="none"/>
          <path d="M342 865H355" stroke="#f01919" stroke-width="1.300" fill="none"/>
          <path d="M342 863V868" stroke="#1930f0" stroke-width="2" fill="none"/>
          <text class="ax-y" x="339.500" y="849">y</text>
          <text class="ax-x" x="354.500" y="861">x</text>
        </g>
        <g class="cube">
          <path d="M1355 240L1362 233H1405V282L1399 290H1355z" fill="#d3d3d3" stroke="#bbb"/>
          <path d="M1355 240H1399V290M1399 240L1405 233" fill="none" stroke="#bbb"/>
          <text class="cube-t" x="1377" y="271">FRONT</text>
        </g>
        <text class="hud" x="331" y="219">00:03:45 1119x688 | CPU | samples 3/2/2/2/2/2 | 1298.66 MB</text>
        <rect x="331" y="251" width="251" height="9" fill="#f5ef6a"/>
        <text class="hud" x="591" y="259">100.00%</text>
      </svg>
    </div>
  </section>

  <section class="attr">
    <ul class="attr-menu"><li>List</li><li>Selected</li><li>Focus</li><li>Attributes</li><li>Display</li><li>Show</li><li>Help</li>
      <li class="pin"><svg viewBox="0 0 12 12" width="12" height="12"><path d="M7 0l5 5-2 1-3 3-1 2-2-2-3 3-1-1 3-3-2-2 2-1 3-3z" fill="#888"/></svg></li>
    </ul>
    <p class="attr-msg">Select an object in the scene to view and edit its attributes</p>
    <div class="attr-btns"><span class="ab dimmed">Select</span><span class="ab ab-on">Load Attributes</span><span class="ab dimmed">Copy Tab</span></div>
  </section>

  <aside class="side">
    <span class="side-tab st-1">Channel Box / Layer Editor</span>
    <span class="side-tab st-2">Attribute Editor</span>
    <span class="side-tab st-3">Modeling Toolkit</span>
  </aside>
</main>

<section class="time">
  <i class="grip grip-t"></i>
  <div class="track">
    <i class="rail rail-top"></i>
    <div class="t-labels"><span>5</span><span>10</span><span>15</span><span>20</span><span>25</span><span>30</span><span>35</span><span>40</span><span>45</span><span>50</span><span>55</span><span>60</span><span>65</span><span>70</span><span>75</span><span>80</span><span>85</span><span>90</span><span>95</span><span>100</span><span>105</span><span>110</span><span>115</span><span>120</span></div>
    <i class="t-ticks"></i>
    <i class="t-line"></i>
    <i class="rail rail-bot"></i>
    <i class="t-cur"></i>
    <span class="t-one">1</span>
  </div>
  <span class="darkbox db-frame">1</span>
  <div class="transport">
    <svg viewBox="0 0 16 14"><path d="M0 1h2v12H0zM9 1L3 7l6 6zM16 1l-6 6 6 6z" fill="#c0c0c0"/></svg>
    <svg viewBox="0 0 16 14"><path d="M2 1h2.500v12H2zM14 1L6 7l8 6z" fill="#c0c0c0"/></svg>
    <svg viewBox="0 0 16 18"><path d="M1 2h4v14H1z" fill="#d8793a"/><path d="M15 3L7 9l8 6z" fill="#c0c0c0"/></svg>
    <svg viewBox="0 0 16 18"><path d="M13 2L2 9l11 7z" fill="#c0c0c0"/></svg>
    <svg viewBox="0 0 16 18"><path d="M3 2l11 7-11 7z" fill="#c0c0c0"/></svg>
    <svg viewBox="0 0 16 18"><path d="M1 3l8 6-8 6z" fill="#c0c0c0"/><path d="M11 2h4v14h-4z" fill="#d8793a"/></svg>
    <svg viewBox="0 0 16 14"><path d="M2 1l8 6-8 6zM11.500 1H14v12h-2.500z" fill="#c0c0c0"/></svg>
    <svg viewBox="0 0 16 14"><path d="M0 1l6 6-6 6zM7 1l6 6-6 6zM14 1h2v12h-2z" fill="#c0c0c0"/></svg>
  </div>
</section>

<section class="range">
  <i class="grip grip-r"></i>
  <span class="darkbox db-start">1</span>
  <div class="r-bar">
    <i class="r-h"></i><span class="r-a">1</span><i class="r-dots"></i><span class="r-b">120</span><i class="r-h r-h2"></i>
  </div>
  <span class="darkbox db-end">200</span>
  <i class="handle handle-r1"></i>
  <svg class="keyi" viewBox="0 0 16 18"><path d="M3 2h7v5l-2 11H5L3 7z" fill="#d8793a"/><path d="M12 2v6M9 5h6" stroke="#e0e0e0" stroke-width="1.800"/></svg>
  <i class="handle handle-r2"></i>
  <i class="tri tri-sm tri-o tri-r1"></i>
  <span class="outbox ob-char">No Character Set</span>
  <i class="tri tri-sm tri-o tri-r2"></i>
  <span class="outbox ob-anim">No Anim Layer</span>
  <i class="handle handle-r3"></i>
  <div class="dd dd-fps"><span class="dd-text">24 fps</span><span class="dd-arrow"><i class="tri"></i></span></div>
  <svg class="r-ic r-loop" viewBox="0 0 18 16"><path d="M3 10V7a2 2 0 0 1 2-2h9M15 6v3a2 2 0 0 1-2 2H4" fill="none" stroke="#c8c8c8" stroke-width="2"/><path d="M12 1l5 4-5 4zM6 7l-5 4 5 4z" fill="#c8c8c8"/></svg>
  <span class="r-active"><svg viewBox="0 0 22 20"><rect x="1" y="5" width="15" height="14" fill="none" stroke="#e08a3a" stroke-width="1.400"/><path d="M1 9h15M1 15h15M4 9v6M8 9v6M12 9v6" stroke="#333" stroke-width="1.500"/><path d="M14 0l7 6-7 5z" fill="#d0d0d0"/></svg></span>
  <i class="handle handle-r4"></i>
  <svg class="r-ic r-sp" viewBox="0 0 18 16"><path d="M0 5h4l5-4v14l-5-4H0z" fill="#c0c0c0"/><path d="M11 4q2 4 0 8M14 2q3 6 0 12" fill="none" stroke="#c0c0c0"/></svg>
  <svg class="r-ic r-cl" viewBox="0 0 18 18"><circle cx="9" cy="9" r="7.500" fill="none" stroke="#a8a8a8" stroke-dasharray="4 2"/><path d="M9 4v6M5 10h8l-4 4z" fill="#d8793a" stroke="#d8793a"/></svg>
  <svg class="r-ic r-run" viewBox="0 0 20 20"><circle cx="6" cy="6" r="4" fill="none" stroke="#c0c0c0" stroke-width="1.600" stroke-dasharray="2 1"/><circle cx="13" cy="4" r="2" fill="#d8793a"/><path d="M12 7l-2 6-4 2M12 8l3 3h4M10 13l4 2 1 4" fill="none" stroke="#d8793a" stroke-width="2.200"/></svg>
</section>

<section class="cmd">
  <i class="grip grip-c"></i>
  <svg class="help" viewBox="0 0 16 16"><circle cx="8" cy="8" r="8" fill="#7ca53c"/><text class="qm" x="8" y="12.500">?</text></svg>
  <span class="msg">Select the menus to appear in the Main Menu Bar</span>
  <i class="cmd-div"></i>
  <span class="mel">MEL</span>
  <i class="input in-a"></i>
  <i class="in-dots"></i>
  <i class="input in-b"></i>
  <svg class="script" viewBox="0 0 18 18"><path d="M0 0h18v4H0z" fill="#c8c8c8"/><rect y="4" width="18" height="14" fill="#b8b8b8"/><text class="scr" x="9" y="14">{;}</text></svg>
</section>

<footer class="taskbar">
  <div class="weather">
    <svg class="moon" viewBox="0 0 34 36">
      <defs><linearGradient id="mg" x1="0" y1="0" x2="0" y2="1"><stop offset="0" stop-color="#f7b733"/><stop offset="1" stop-color="#ee7f1b"/></linearGradient></defs>
      <path d="M31 10q2 14-8 21T1 28q12 1 18-8t4-13z" fill="url(#mg)"/>
      <circle cx="23" cy="11" r="10" fill="#c9261c"/>
      <text class="bdg" x="23" y="16">1</text>
    </svg>
    <div class="w-text"><span>38°F</span><span class="w-sub">Clear</span></div>
  </div>
  <div class="tb-center">
    <svg class="win" viewBox="0 0 29 29">
      <defs>
        <linearGradient id="wa" x1="0" y1="0" x2="1" y2="1"><stop offset="0" stop-color="#52c8fa"/><stop offset="1" stop-color="#1a90e0"/></linearGradient>
        <linearGradient id="wb" x1="0" y1="0" x2="1" y2="1"><stop offset="0" stop-color="#1a90e0"/><stop offset="1" stop-color="#0a6fd0"/></linearGradient>
      </defs>
      <rect width="14" height="14" rx="1" fill="url(#wa)"/><rect x="15" width="14" height="14" rx="1" fill="url(#wa)"/><rect y="15" width="14" height="14" rx="1" fill="url(#wb)"/><rect x="15" y="15" width="14" height="14" rx="1" fill="url(#wb)"/>
    </svg>
    <div class="pill">
      <svg class="p-ic" viewBox="0 0 20 22"><circle cx="8.500" cy="8.500" r="7" fill="none" stroke="#222" stroke-width="1.800"/><path d="M13 14l6 7" stroke="#222" stroke-width="2"/></svg>
      <span class="p-text">Search</span>
      <svg class="doodle" viewBox="0 0 56 40">
        <path d="M2 34q10-8 24-8h22q6 2 6 8-14 6-26 6-18 0-26-6z" fill="#e3c08e"/>
        <path d="M6 8l26-4 2 24-24 3z" fill="#dfe9d0" stroke="#6e9a4e"/>
        <path d="M10 13l18-3M11 18l18-3M11 23l18-3" stroke="#9ab07c"/>
        <path d="M24 16L36 2l3 2-11 14z" fill="#e8a23a"/>
        <rect x="38" y="9" width="15" height="28" rx="4" fill="#1a6fe0"/>
        <path d="M41 9l3-8h4l2 8z" fill="#3a8af0"/>
        <circle cx="46" cy="24" r="6" fill="#5cb0f5"/>
      </svg>
    </div>
    <span class="app app-first"><svg viewBox="0 0 31 32"><defs><linearGradient id="ab1" x1="0" y1="0" x2="1" y2="1"><stop offset="0" stop-color="#fff"/><stop offset="1" stop-color="#d8d8d8"/></linearGradient></defs><rect x="8" y="0" width="23" height="24" rx="1" fill="url(#ab1)"/><rect y="13" width="22" height="19" rx="1" fill="#1f1f1f"/><rect x="8" y="13" width="14" height="11" fill="#a8a8a8"/></svg></span>
    <span class="app"><svg viewBox="0 0 31 36"><defs><linearGradient id="ab2" x1="0" y1="0" x2="1" y2="1"><stop offset="0" stop-color="#8f7be0"/><stop offset="1" stop-color="#5b50b0"/></linearGradient></defs><path d="M15.500 0a15.500 15.500 0 0 1 15.500 15.500c0 9-7 15.500-15 15.500H7l-4 4v-8A15.500 15.500 0 0 1 15.500 0z" fill="url(#ab2)"/><rect x="8" y="10" width="12" height="12" rx="2" fill="#fff"/><path d="M21 14l5-3v10l-5-3z" fill="#fff"/></svg></span>
    <span class="app"><svg viewBox="0 0 31 32"><path d="M0 3a2 2 0 0 1 2-2h8l3 3h18v5H0z" fill="#e8a818"/><path d="M0 7h31v25H0z" fill="#fcd04a"/><rect y="26" width="31" height="6" fill="#f5b52e"/><rect x="11" y="18" width="9" height="3" rx="1" fill="#2a7fc8"/></svg></span>
    <span class="app"><svg viewBox="0 0 30 32"><path d="M15 1q2 4 1 6 6 0 8 6l-1 2q-1 10-8 15-7-2-9-9l-3-5q1-8 7-10 2-3 5-5z" fill="#b86f28"/><path d="M14 12q6-3 9 3 1 6-1 11-4 4-7 3-4-3-5-9 0-6 4-8z" fill="#f4dfb8"/><circle cx="15" cy="16" r="1.700" fill="#222"/><circle cx="21" cy="16" r="1.700" fill="#222"/><path d="M15 24q4 2 6-1" stroke="#222" fill="none"/></svg></span>
    <span class="app"><svg viewBox="0 0 30 32"><path d="M15 1a14 15 0 0 1 13 8H15a7 7 0 0 0-7 3L4 6a14 15 0 0 1 11-5z" fill="#db4437"/><path d="M4 6l7 13a7 7 0 0 0 7 3l-5 9A15 15 0 0 1 4 6z" fill="#0f9d58"/><path d="M28 9a15 15 0 0 1-15 22l6-11a7 7 0 0 0 1-8 7 7 0 0 0-2-3z" fill="#f4b400"/><circle cx="15" cy="16" r="6.500" fill="#fff"/><circle cx="15" cy="16" r="5" fill="#4285f4"/></svg></span>
    <span class="app"><svg viewBox="0 0 30 32"><path d="M3 2l3-2h21v22H3z" fill="#37a5cc"/><path d="M1 4h3v18H1z" fill="#2d7f9e"/><path d="M3 21h26v11H4z" fill="#2d6078"/><text class="tm" x="16" y="17">M</text><text class="taya" x="16" y="29">AYA</text></svg></span>
    <span class="app"><svg viewBox="0 0 30 32"><rect width="30" height="32" rx="6" fill="#1d2b00"/><text class="pt" x="15" y="22">Pt</text></svg></span>
    <span class="app app-on"><svg viewBox="0 0 30 38"><path d="M4 3h12a4 4 0 0 1 4 4v10" fill="none" stroke="#d8391a" stroke-width="3" stroke-dasharray="4 2"/><path d="M1 12v9a4 4 0 0 0 4 4h9" fill="none" stroke="#d8391a" stroke-width="3" stroke-dasharray="4 2"/><rect x="8" y="8" width="12" height="14" fill="#d4d4d4"/><path d="M8 21l18-1M20 16l3 20" stroke="#8a8a8a" stroke-width="2"/><circle cx="26" cy="16" r="2.600" fill="none" stroke="#1a8fe0" stroke-width="1.800"/><circle cx="19" cy="35" r="2.400" fill="none" stroke="#1a8fe0" stroke-width="1.800"/></svg></span>
    <span class="app"><svg viewBox="0 0 31 36"><defs><linearGradient id="ab3" x1="0" y1="0" x2="0" y2="1"><stop offset="0" stop-color="#e8a0f5"/><stop offset="1" stop-color="#5a3ff0"/></linearGradient></defs><path d="M0 7L28 0l2 6-30 7z" fill="#8a4fd8"/><rect y="11" width="31" height="25" rx="3" fill="url(#ab3)"/><path d="M0 20h16v16H3a3 3 0 0 1-3-3zM12 14h19v10H12z" fill="#b07af0" fill-opacity=".5"/></svg></span>
    <i class="dot dot-a"></i><i class="dot dot-b"></i><i class="dot dot-c"></i><i class="bar-on"></i><i class="dot dot-d"></i>
  </div>
  <div class="tray">
    <svg class="tr tr-chev" viewBox="0 0 16 10"><path d="M2 8l6-6 6 6" fill="none" stroke="#222" stroke-width="1.500"/></svg>
    <svg class="tr tr-cloud" viewBox="0 0 22 16"><path d="M5 15a4 4 0 0 1-1-8 6 6 0 0 1 11-2 5 5 0 0 1 2 10z" fill="#b8bcc0" stroke="#222"/></svg>
    <svg class="tr tr-wifi" viewBox="0 0 20 16"><path d="M1 6q9-8 18 0M4 9q6-5 12 0M7 12q3-2 6 0" fill="none" stroke="#111" stroke-width="1.400"/><circle cx="10" cy="14.500" r="1.400" fill="#111"/></svg>
    <svg class="tr tr-vol" viewBox="0 0 20 16"><path d="M1 5h3l5-4v14l-5-4H1z" fill="none" stroke="#111"/><path d="M12 5q1.500 3 0 6M15 3q2.500 5 0 10" fill="none" stroke="#111"/><path d="M18 2q3 6 0 12" fill="none" stroke="#aaa"/></svg>
    <svg class="tr tr-bat" viewBox="0 0 20 16"><rect x="1" y="3" width="16" height="11" rx="2" fill="none" stroke="#111" stroke-width="1.400"/><rect x="6" y="5" width="10" height="7" fill="#111"/><path d="M18 6h2v5h-2z" fill="#111"/><path d="M5 0L2 7h3l-1 5 5-7H6z" fill="#111" stroke="#d6e2eb" stroke-width=".6"/></svg>
    <div class="clock"><span>8:23 PM</span><span>11/17/2023</span></div>
    <svg class="bell" viewBox="0 0 18 20"><path d="M9 0a6 6 0 0 1 6 6v6l2 3H1l2-3V6a6 6 0 0 1 6-6z" fill="#0a3a8a"/><path d="M6 17h6a3 3 0 0 1-6 0z" fill="#0a3a8a"/></svg>
  </div>
</footer>
</body>
</html>
```
FILE: styles.css
```
*{box-sizing:border-box;margin:0;padding:0}
html,body{width:1920px;height:1080px;overflow:hidden}
body{background:#363636;font:11px "Open Sans","Liberation Sans",sans-serif;color:#c8c8c8;display:flex;flex-direction:column}
ul{list-style:none}
i{display:block;font-style:normal}
svg{display:block;flex:none}
.defs{position:absolute}

/* shared */
.tri{width:0;height:0;border-left:6px solid transparent;border-right:6px solid transparent;border-top:7px solid #c4c4c4}
.tri-up{border-top:0;border-bottom:7px solid #c4c4c4}
.tri-g{border-top-color:#9a9a9a;border-bottom-color:#9a9a9a}
.tri-sm{flex:none;border-left-width:5px;border-right-width:5px;border-top-width:6px;border-top-color:#7c7c7c}
.tri-w{border-top-color:#e8e8e8;margin-left:auto;margin-right:4px}
.grip{flex:none;width:5px;background-image:radial-gradient(circle,#8a8a8a .8px,transparent 1px);background-size:2.500px 3.500px}
.handle{flex:none;width:23px;height:22px;background:linear-gradient(#6e6e6e,#6e6e6e) center/3px 100% no-repeat}

/* title */
.title{height:29px;background:#f3f3f3;display:flex;align-items:center;flex:none}
.t-logo{width:20px;height:20px;margin-left:3px}
.t-m{font:700 11px "Open Sans",sans-serif;fill:#fff;text-anchor:middle}
.t-aya{font:700 5px "Open Sans",sans-serif;fill:#d8e8ee;text-anchor:middle}
.t-text{margin-left:5px;font-size:14px;color:#7c7c7c;white-space:nowrap}
.t-ctrls{margin-left:auto;display:flex;gap:44px;padding-right:25px}
.t-c{width:14px;height:14px}

/* menu */
.menu{height:27px;background:#444;display:flex;align-items:center;flex:none}
.home{width:16px;height:16px;margin-left:8px}
.menu-list{display:flex;gap:15px;margin-left:13px}
.menu-list li:nth-child(7){margin-left:2px}
.menu-list li:nth-child(13){margin-left:-1px}
.workspace{margin-left:auto;display:flex;align-items:center;height:20px}
.ws-label{color:#b4b4b4;margin-right:4px}
.ws-box{width:171px;height:20px;background:#5a5a5a;padding-left:4px;line-height:20px}
.ws-arrow{width:19px;height:20px;margin-left:2px;background:#555;display:flex;align-items:center;justify-content:center}
.lock{width:13px;height:17px;margin:0 7px 0 8px}

/* status line */
.status{height:31px;background:#444;display:flex;align-items:center;flex:none;padding:0 0 4px 3px}
.grip-s{height:25px;margin-right:6px}
.dd{display:flex;height:20px;flex:none}
.dd-mode{width:98px}
.dd-text{flex:1;background:#5a5a5a;padding-left:4px;line-height:20px;border-radius:2px 0 0 2px}
.dd-arrow{width:19px;margin-left:1px;background:#5a5a5a;display:flex;align-items:center;justify-content:center;border-radius:0 2px 2px 0}
.slot{flex:none;width:23px;height:24px;display:flex;align-items:center;justify-content:center}
.slot-first{margin-left:2px}
.slot-on{background:#5285a6}
.ic{width:19px;height:20px}
.ic-l{width:22px;height:22px}
.ipr{font:700 6px "Open Sans",sans-serif;fill:#444;text-anchor:middle}
.collapse{width:5px;height:20px;margin:0 11px 0 5px}
.collapse-d{margin:0 8px 0 10px}
.tri-a{margin:0 6px 0 2px}
.outbox{flex:none;height:21px;border:1px solid #525252;border-radius:3px;display:flex;align-items:center;padding-left:5px;white-space:nowrap}
.ob-live{width:99px}
.handle-b{margin-left:1.500px}
.tri-c{margin:0 4px 0 3.500px}
.ob-sym{width:100px}
.profile{flex:none;width:150px;height:27px;margin:4px 0 0 1px;background:#555;display:flex;align-items:center;padding-left:6px}
.person{width:14px;height:16px}
.p-name{margin-left:3px;color:#ddd}
.helpx{width:18px;height:20px;margin-left:3px}
.st-right{margin-left:auto;display:flex;padding-right:2px}
.st-right .slot{height:22px}

/* shelf */
.shelf{height:65px;margin-top:3px;background:#444;display:flex;flex:none;padding-left:3px}
.grip-sh{height:62px;margin:2px 6px 0 0}
.shelf-left{width:20px;margin-top:1px;background:#3b3b3b;display:flex;flex-direction:column;align-items:center;padding-top:12px}
.eq{width:12px;height:8px}
.eq-gear{width:14px;height:14px;margin-top:22px}
.shelf-main{flex:1;margin-left:3px;min-width:0;display:flex;flex-direction:column}
.tabs{height:20px;margin:2px 3px 0 0;background:#393939;display:flex;gap:1.640px;padding-left:2px;flex:none}
.tab{flex:none;height:20px;line-height:20px;text-align:center;background:#3d3d3d;border-radius:2px 2px 0 0;white-space:nowrap}
.tab:nth-child(1){width:61px}
.tab:nth-child(2){width:72px}
.tab:nth-child(3){width:102px}
.tab:nth-child(4){width:78px}
.tab:nth-child(5){width:83px}
.tab:nth-child(6){width:68px}
.tab:nth-child(7){width:81px}
.tab:nth-child(8){width:83px}
.tab:nth-child(9){width:41px}
.tab:nth-child(10){width:86px}
.tab:nth-child(11){width:67px}
.tab:nth-child(12){width:60px}
.tab:nth-child(13){width:113px}
.tab:nth-child(14){width:56px}
.tab:nth-child(15){width:62px}
.dim{color:#8a8a8a}
.on{background:#474747;color:#bbb}
.shelf-icons{flex:1;display:flex;align-items:center;padding:0 0 4px 4px}
.si{flex:none;width:35px;display:flex;justify-content:center}
.si svg{width:26px;height:26px}
.sep{flex:none;width:3px;height:34px;background:#8a8a8a;margin:0 15.500px}
.shelf-scroll{margin-left:auto;margin-right:9px;width:11px;height:35px;background:#383838;display:flex;flex-direction:column;align-items:center;justify-content:space-between;padding:2px 0}
.shelf-scroll .tri{border-left-width:4.500px;border-right-width:4.500px;border-top-width:6px}
.shelf-scroll .tri-up{border-top-width:0;border-bottom-width:6px}
.scroll-dot{width:10px;height:10px;border-radius:50%;background:#666}

/* main */
.work{height:737px;margin-top:2px;display:flex;flex:none;gap:2px}
.toolbox{width:44px;background:#444;display:flex;flex-direction:column;align-items:center;flex:none;padding:14px 0 5px}
.tool{width:36px;height:37px;display:flex;align-items:center;justify-content:center;flex:none}
.tool-first{height:36px}
.tool-on{background:#5285a6}
.ti{width:30px;height:30px}
.tool-manip{height:34px;margin-top:38px}
.tb-line{width:36px;height:2px;background:#8a8a8a;flex:none}
.tb-line-a{margin-top:7px}
.lay{flex:none;width:29px;display:block}
.lay svg{width:29px;height:29px}
.lay-one{margin-top:8px}
.lay-four{margin-top:8px}
.lay-two{margin-top:9px;height:28px}
.lay-two svg{height:28px}
.tool-out{width:36px;height:36px;background:#5285a6;margin-top:5px;display:flex;align-items:center;justify-content:center;flex:none}
.ti-out{width:29px;height:29px}
.tb-line-b{margin-top:5px}
.tb-search{width:22px;height:22px;margin-top:13px}
.tb-logo{width:30px;height:32px;margin-top:auto}
.l-m{font:700 17px "Open Sans",sans-serif;fill:#fff;text-anchor:middle}
.l-aya{font:700 6.500px "Open Sans",sans-serif;fill:#d8e8ee;text-anchor:middle}

/* outliner */
.outliner{width:266px;flex:none;display:flex;flex-direction:column}
.pane-tabs{height:20px;padding-left:2px;background:#3a3a3a;flex:none}
.pane-tab{display:block;width:70px;height:20px;background:#444;text-align:center;line-height:26px;border-radius:2px 2px 0 0}
.out-body{flex:1;background:#444;padding:0 4px;display:flex;flex-direction:column;min-height:0}
.out-menu{display:flex;gap:15px;height:20px;align-items:center;padding-left:7px;flex:none}
.out-search{height:18px;margin-top:7px;display:flex;align-items:center;flex:none;padding-left:5px}
.s-ico{width:15px;height:16px}
.s-field{margin-left:8px;width:228px;height:18px;background:#2b2b2b;border-radius:2px;display:flex;align-items:center;padding:0 4px;color:#777}
.s-field .tri{margin-left:auto;border-left-width:5px;border-right-width:5px;border-top-width:6px;border-top-color:#b8b8b8}
.list{height:649px;margin-top:3px;background:#393939;display:flex;flex:none}
.rows{flex:1}
.row{height:20px;display:flex;align-items:center;padding-left:21px;white-space:nowrap}
.rows .row:first-child{margin-top:-2px}
.row span{margin-left:3px}
.off{color:#6a6a6a}
.off .ri{opacity:.85}
.ex{display:block;flex:none;width:9px;height:9px;margin-right:5px}
.ri{flex:none;width:16px;height:16px}
.v-scroll{width:10px;display:flex;flex-direction:column;align-items:center;padding-top:2px;flex:none}
.v-scroll .tri{border-left-width:5px;border-right-width:5px;border-top-width:5px}
.v-scroll .tri-up{border-top-width:0;border-bottom-width:5px}
.v-thumb{width:10px;height:620px;background:#5c5c5c;border-radius:5px;margin:4px 0}
.h-scroll{height:10px;background:#393939;display:flex;align-items:center;padding-left:3px;flex:none}
.tri-l{width:0;height:0;border-top:5px solid transparent;border-bottom:5px solid transparent;border-right:5px solid #9a9a9a}
.tri-r{width:0;height:0;border-top:5px solid transparent;border-bottom:5px solid transparent;border-left:5px solid #9a9a9a;margin-left:4px}
.h-thumb{width:218px;height:10px;margin-left:5px;background:#5c5c5c;border-radius:5px}
.h-dots{height:2px;width:86px;margin:2px 0 0 85px;background-image:radial-gradient(circle,#8a8a8a .7px,transparent 1px);background-size:3.500px 2px}

/* viewport */
.view{width:1122px;margin-left:1px;flex:none;border-top:1px solid #707070;border-left:1px solid #8a8a8a;border-right:2px solid #8a8a8a;border-bottom:2px solid #8a8a8a;background:#444;display:flex;flex-direction:column;margin-top:2px;height:733px}
.view-menu{display:flex;gap:16px;height:21px;align-items:center;padding-left:8px;flex:none}
.view-bar{height:21px;display:flex;align-items:center;flex:none}
.vh{flex:none;height:18px;background:linear-gradient(#6e6e6e,#6e6e6e) center/3px 100% no-repeat}
.vh-10{width:10px}
.vh-11{width:11px}
.vh-12{width:12px}
.vs{flex:none;width:19px;height:21px;display:flex;align-items:center;justify-content:center}
.vs svg{width:15px;height:15px}
.vs-on{background:#5285a6}
.vs-dk{background:#3a3a3a}
.vs-off svg{width:18px;height:18px}
.vs-onx{margin:0 2px 0 3px}
.va{font:700 12px "Open Sans",sans-serif;fill:#fff;text-anchor:middle}
.von{font:700 6px "Open Sans",sans-serif;fill:#d8e8ee;text-anchor:middle}
.numbox{flex:none;height:19px;width:37px;background:#2b2b2b;border-radius:2px;line-height:19px;padding-left:5px}
.nb-a{margin:0 3px}
.nb-b{width:38px;margin-left:2px;padding-left:6px}
.aces{flex:none;width:177px;height:20px;background:#5a5a5a;line-height:20px;padding-left:4px;white-space:nowrap}
.aces-arrow{flex:none;width:20px;height:20px;margin-left:1px;background:#5a5a5a;display:flex;align-items:center;justify-content:center}
.canvas{flex:1;min-height:0;overflow:hidden;background:#cfcfcf}
.scene{width:1119px;height:688px}
.gl path{fill:none;stroke:#3c3c3c;stroke-width:1}
.gm{fill:none;stroke:#333;stroke-width:2}
.ax-y{font:700 8px "Liberation Mono",monospace;fill:#19c919}
.ax-x{font:700 8px "Liberation Mono",monospace;fill:#f01919}
.cube-t{font:700 7.500px "Liberation Sans",sans-serif;fill:#a9a9a9;text-anchor:middle;letter-spacing:.5px}
.hud{font:700 10px "Liberation Mono",monospace;fill:#cfc52c}

/* attribute editor */
.attr{width:464px;margin-left:1px;background:#444;flex:none;display:flex;flex-direction:column}
.attr-menu{display:flex;gap:15px;height:38px;padding:0 0 1px 12px;align-items:center;flex:none}
.pin{margin-left:auto;margin-right:11px}
.attr-msg{flex:1;text-align:center;padding-top:321px;font-size:10.800px;font-weight:600;color:#dadada}
.attr-btns{display:flex;gap:2px;height:27px;padding:0 2px 0 4px;margin-bottom:3px;flex:none}
.ab{flex:1;background:#4c4c4c;line-height:26px;text-align:center}
.ab-on{background:#5a5a5a;color:#e0e0e0}
.dimmed{color:#7a7a7a}

/* side tabs */
.side{flex:1;margin-left:-2px;background:#3c3c3c;position:relative;min-width:0}
.side-tab{position:absolute;left:-2px;width:16px;writing-mode:vertical-rl;line-height:14px;color:#888;white-space:nowrap}
.st-1{top:16px}
.st-2{top:181px;color:#d0d0d0;background:#444}
.st-3{top:291px}

/* time slider */
.time{height:50px;margin-top:1px;background:#444;display:flex;flex:none;align-items:center}
.grip-t{height:44px;margin-left:3px;margin-right:8px}
.track{flex:none;width:1613px;height:48px;position:relative;display:flex;flex-direction:column;overflow:hidden;background:#2b2b2b}
.rail{flex:none;background-color:#444;background-image:repeating-linear-gradient(90deg,transparent 0 65.500px,#222 65.500px 66.500px);background-position:-4px 0}
.rail-top{height:8px}
.rail-bot{height:6px}
.t-labels{height:16px;display:flex;padding-left:68px;flex:none;color:#9a9a9a;line-height:15px}
.t-labels span{flex:none;width:66.500px}
.t-ticks{height:16px;flex:none;background-image:repeating-linear-gradient(90deg,transparent 0 65.500px,#b0b0b0 65.500px 66.500px);background-position:-4px 0}
.t-line{height:2px;background:#5a5a5a;flex:none}
.t-cur{position:absolute;left:8px;top:0;width:13px;height:48px;background:rgba(255,255,255,.14)}
.t-one{position:absolute;left:14px;top:23px;width:7px;height:16px;background:#22222a;color:#e8e8e8;text-align:center;line-height:16px}
.darkbox{flex:none;background:#2b2b2b;border-radius:2px;height:20px;line-height:20px;padding-left:6px;color:#c8c8c8}
.db-frame{width:50px;margin-left:9px;margin-top:-2px}
.transport{display:flex;margin-left:4px;margin-top:-2px}
.transport svg{width:28px;height:15px}

/* range */
.range{height:37px;background:#444;display:flex;align-items:center;flex:none}
.grip-r{height:30px;margin-left:3px;margin-right:9px}
.db-start{width:50px}
.r-bar{flex:none;width:1090px;height:20px;margin-left:9px;background:#444;border:2px solid #2b2b2b;border-radius:2px;display:flex;align-items:center}
.r-h{flex:none;width:8px;height:16px;background:#9a9a9a}
.r-a{margin-left:11px}
.r-dots{width:5px;height:13px;margin-left:304px;background-image:radial-gradient(circle,#999 .7px,transparent 1px);background-size:2.500px 3px}
.r-b{margin-left:auto;margin-right:8px}
.r-h2{margin-right:425px}
.db-end{width:55px;margin-left:5px}
.handle-r1{margin-left:9.500px}
.keyi{width:16px;height:18px;margin-left:11.500px}
.handle-r2{margin-left:12px}
.tri-o{border-top-color:#8a8a8a}
.tri-r1{margin-left:13px;margin-top:-4px}
.ob-char{width:101px;height:20px;margin-left:7px}
.tri-r2{margin-left:14px;margin-top:-4px}
.ob-anim{width:101px;height:20px;margin-left:7px}
.handle-r3{margin-left:10.500px}
.dd-fps{width:95px;margin-left:12px}
.r-ic{width:18px;height:18px}
.r-loop{margin-left:15px}
.r-active{flex:none;width:23px;height:23px;margin-left:11px;background:#5285a6;display:flex;align-items:center;justify-content:center}
.r-active svg{width:20px;height:18px}
.handle-r4{margin-left:8.500px}
.r-sp{margin-left:11px}
.r-cl{margin-left:12px}
.r-run{margin-left:10px}

/* command line */
.cmd{height:37px;margin-top:1px;background:#444;display:flex;align-items:center;flex:none}
.grip-c{height:30px;margin-left:3px}
.help{width:16px;height:16px;margin-left:8px}
.qm{font:700 12px "Open Sans",sans-serif;fill:#fff;text-anchor:middle}
.msg{margin-left:8px;font-size:10px;color:#d8d8d8;width:940px;white-space:nowrap;flex:none}
.cmd-div{flex:none;width:2px;height:37px;background:#383838}
.mel{margin-left:15px;width:28px;flex:none;color:#ddd}
.input{flex:none;height:20px;background:#2b2b2b;border-radius:2px}
.in-a{width:334px}
.in-dots{flex:none;width:4px}
.in-b{width:520px}
.script{width:18px;height:18px;margin-left:10px}
.scr{font:700 7px "Liberation Mono",monospace;fill:#333;text-anchor:middle}

/* taskbar */
.taskbar{height:60px;flex:none;background:linear-gradient(90deg,#d9e4ec,#d4e1ea 50%,#d7e3ec);display:flex;padding-bottom:1px;color:#222}
.weather{display:flex;width:557px;flex:none;padding-left:26px;align-items:center}
.moon{width:34px;height:36px;margin-top:2px}
.bdg{font:700 12px "Open Sans",sans-serif;fill:#fff;text-anchor:middle}
.w-text{display:flex;flex-direction:column;font-size:14px;line-height:20px;margin-left:4px;margin-top:-1px}
.w-sub{color:#555}
.tb-center{display:flex;align-items:center;position:relative;flex:none;width:820px}
.win{width:29px;height:29px}
.pill{width:273px;height:38px;margin-left:19px;background:#f2f6f9;border-radius:19px;display:flex;align-items:center;padding-left:13px;box-shadow:0 0 0 1px #e4eaef}
.p-ic{width:20px;height:22px}
.p-text{margin-left:12px;font-size:15.500px;color:#555}
.doodle{width:56px;height:40px;margin-left:auto;margin-right:8px}
.app{flex:none;width:55.200px;height:48px;display:flex;align-items:center;justify-content:center}
.app-first{margin-left:2px}
.app svg{width:30px;height:32px}
.app-on{background:#eaf0f6;border-radius:4px}
.tm{font:700 15px "Open Sans",sans-serif;fill:#fff;text-anchor:middle}
.taya{font:700 7px "Open Sans",sans-serif;fill:#d8e8ee;text-anchor:middle}
.pt{font:700 18px "Open Sans",sans-serif;fill:#b8e000;text-anchor:middle}
.dot{position:absolute;top:51px;width:7px;height:4px;border-radius:2px;background:#6e7478}
.dot-a{left:568px}
.dot-b{left:622px}
.dot-c{left:678px}
.dot-d{left:788px}
.bar-on{position:absolute;top:51px;left:726px;width:20px;height:4px;border-radius:2px;background:#0a78d4}
.tray{flex:1;display:flex;align-items:center;min-width:0}
.tr{width:18px;height:16px;flex:none}
.tr-chev{margin-left:233px;width:16px;height:10px}
.tr-cloud{margin-left:22px;width:22px}
.tr-wifi{margin-left:19px;width:20px}
.tr-vol{margin-left:10px;width:20px}
.tr-bat{margin-left:10px;width:20px}
.clock{margin-left:auto;display:flex;flex-direction:column;align-items:flex-end;font-size:15px;line-height:20px;color:#222}
.bell{width:18px;height:20px;margin:0 26px 0 10px}
```
